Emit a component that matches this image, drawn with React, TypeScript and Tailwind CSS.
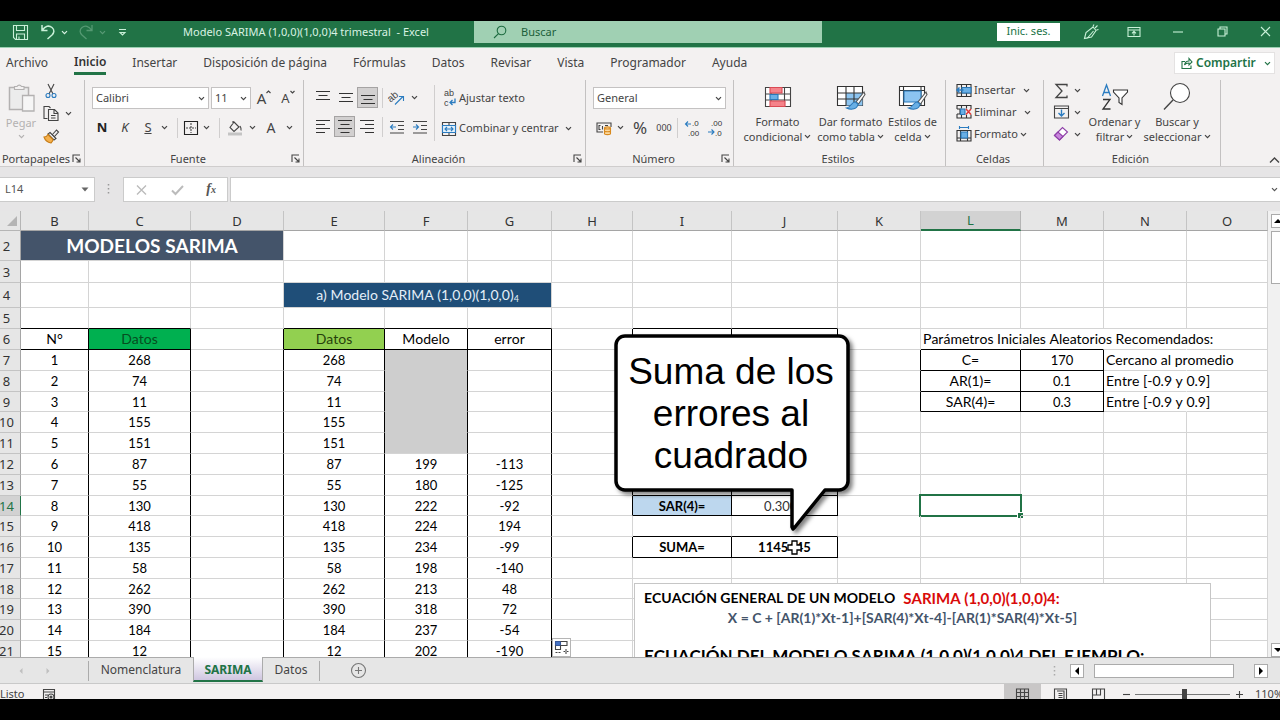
import React, { FC, ReactElement, ReactNode } from 'react';

const columns = ['B', 'C', 'D', 'E', 'F', 'G', 'H', 'I', 'J', 'K', 'L', 'M', 'N', 'O'];
const columnWidths = [68, 102, 93, 101, 83, 84, 81, 99, 106, 83, 100, 83, 83];

const datos = [268, 74, 11, 155, 151, 87, 55, 130, 418, 135, 58, 262, 390, 184, 12];
const modelo = [199, 180, 222, 224, 234, 198, 213, 318, 237, 202];
const errores = [-113, -125, -92, 194, -99, -140, 48, 72, -54, -190];

const rowHeights: Record<number, string> = {
  2: 'h-[30px]',
  3: 'h-[22px]',
  4: 'h-[25px]',
  9: 'h-[20px]',
  14: 'h-[20px]',
  18: 'h-[20px]',
};

interface Cell {
  text?: ReactNode;
  span?: number;
  className?: string;
}

const cells: Record<string, Cell> = {
  B2: { text: 'MODELOS SARIMA', span: 3, className: 'bg-[#44546a] text-[19px] font-bold text-white' },
  E4: {
    text: (
      <>
        a) Modelo SARIMA (1,0,0)(1,0,0)<sub className="text-[9px]">4</sub>
      </>
    ),
    span: 3,
    className: 'bg-[#1f4e78] text-[14px] text-[#e4eef8]',
  },
  B6: { text: 'N°', className: 'text-[14px]' },
  C6: { text: 'Datos', className: 'bg-[#00b050] text-[14px] text-[#064d20]' },
  E6: { text: 'Datos', className: 'bg-[#92d050] text-[14px] text-[#26400c]' },
  F6: { text: 'Modelo', className: 'text-[14px]' },
  G6: { text: 'error', className: 'text-[14px]' },
  L6: { text: 'Parámetros Iniciales Aleatorios Recomendados:', className: 'text-left text-[14px]' },
  L7: { text: 'C=', className: 'text-[14px]' },
  M7: { text: '170' },
  N7: { text: 'Cercano al promedio', className: 'text-left text-[14px]' },
  L8: { text: 'AR(1)=', className: 'text-[14px]' },
  M8: { text: '0.1' },
  N8: { text: 'Entre [-0.9 y 0.9]', className: 'text-left text-[14px]' },
  L9: { text: 'SAR(4)=', className: 'text-[14px]' },
  M9: { text: '0.3' },
  N9: { text: 'Entre [-0.9 y 0.9]', className: 'text-left text-[14px]' },
  I14: { text: 'SAR(4)=', className: 'bg-[#bdd7ee] font-bold' },
  J14: { text: '0.3000', className: 'text-[#333]' },
  I16: { text: 'SUMA=', className: 'font-bold' },
  J16: { text: '1145445', className: 'font-bold' },
};

datos.forEach((value, i) => {
  cells[`B${i + 7}`] = { text: i + 1 };
  cells[`C${i + 7}`] = { text: value };
  cells[`E${i + 7}`] = { text: value };
  if (i < 5) {
    cells[`F${i + 7}`] = { className: 'bg-[#cecece]' };
  } else {
    cells[`F${i + 7}`] = { text: modelo[i - 5] };
    cells[`G${i + 7}`] = { text: errores[i - 5] };
  }
});

const rightBorder = (col: string, row: number): string => {
  if (row >= 6 && 'BCDEFG'.includes(col)) return 'border-r-black';
  if (row >= 6 && row <= 14 && 'HIJ'.includes(col)) return 'border-r-black';
  if (row === 16 && 'HIJ'.includes(col)) return 'border-r-black';
  if (row >= 7 && row <= 9 && 'KLM'.includes(col)) return 'border-r-black';
  // text that runs over into the next cells hides the grid line
  if (row === 6 && 'LMN'.includes(col)) return 'border-r-transparent';
  if (row >= 7 && row <= 9 && col === 'N') return 'border-r-transparent';
  return 'border-r-[#d4d4d4]';
};

const bottomBorder = (col: string, row: number): string => {
  if ((row === 5 || row === 6) && 'BCEFG'.includes(col)) return 'border-b-black';
  if ([5, 13, 14, 15, 16].includes(row) && 'IJ'.includes(col)) return 'border-b-black';
  if (row >= 6 && row <= 9 && 'LM'.includes(col)) return 'border-b-black';
  if (row >= 7 && row <= 10 && col === 'F') return 'border-b-[#cecece]';
  return 'border-b-[#d4d4d4]';
};

const Chevron: FC<{ className?: string }> = ({ className = '' }): ReactElement => (
  <svg className={`w-[7px] h-[7px] shrink-0 ${className}`} viewBox="0 0 7 7" fill="none" stroke="currentColor" strokeWidth="1.2">
    <path d="M1 2.2 3.5 4.7 6 2.2" />
  </svg>
);

interface IconProps {
  w?: number;
  h?: number;
  className?: string;
  children: ReactNode;
}

const Icon: FC<IconProps> = ({ w = 16, h = 16, className = '', children }): ReactElement => (
  <svg
    width={w}
    height={h}
    viewBox={`0 0 ${w} ${h}`}
    className={`shrink-0 overflow-visible font-['Liberation_Sans',sans-serif] ${className}`}
    fill="none"
    stroke="#444"
    strokeWidth="1.1"
  >
    {children}
  </svg>
);

const Divider: FC<{ className?: string }> = ({ className = 'h-5' }): ReactElement => (
  <div className={`w-px shrink-0 bg-[#d0cece] ${className}`} />
);

interface ToolProps {
  label: string;
  className?: string;
  children: ReactNode;
}

const Tool: FC<ToolProps> = ({ label, className = 'w-[23px]', children }): ReactElement => (
  <button type="button" aria-label={label} className={`flex h-[21px] shrink-0 items-center justify-center ${className}`}>
    {children}
  </button>
);

const Lines: FC<{ d: string }> = ({ d }): ReactElement => (
  <Icon>
    <path d={d} stroke="#333" />
  </Icon>
);

interface GroupProps {
  title: string;
  className: string;
  launcher?: boolean;
  children: ReactNode;
}

const Group: FC<GroupProps> = ({ title, className, launcher = false, children }): ReactElement => (
  <section className={`flex shrink-0 flex-col border-r border-[#c3c1c1] ${className}`}>
    <div className="flex h-[71px] shrink-0">{children}</div>
    <div className="flex h-[15px] items-center pr-[3px]">
      <span className="flex-1 text-center text-[11px] leading-[15px] whitespace-nowrap">{title}</span>
      {launcher && (
        <button type="button" aria-label={`Opciones de ${title}`}>
          <Icon w={9} h={9}>
            <path d="M1 8V1h7M3.500 3.500 8 8M8 4.500V8H4.500" />
          </Icon>
        </button>
      )}
    </div>
  </section>
);

interface PickerProps {
  label: string;
  value: string;
  className: string;
}

const Picker: FC<PickerProps> = ({ label, value, className }): ReactElement => (
  <div className={`flex h-[22px] shrink-0 items-center border border-[#c4c2c2] bg-white pr-[3px] ${className}`}>
    <select aria-label={label} className="min-w-0 flex-1 appearance-none bg-transparent pl-[3px] text-[11px] outline-none">
      <option>{value}</option>
    </select>
    <Chevron />
  </div>
);

interface BigButtonProps {
  lines: [string, string];
  className: string;
  icon: ReactNode;
}

const BigButton: FC<BigButtonProps> = ({ lines, className, icon }): ReactElement => (
  <button type="button" className={`flex shrink-0 flex-col items-center text-[11px] leading-[15px] whitespace-nowrap ${className}`}>
    <span className="flex h-[34px] items-center">{icon}</span>
    <span>{lines[0]}</span>
    <span className="flex items-center gap-[2px]">
      {lines[1]}
      <Chevron />
    </span>
  </button>
);

const brush = (
  <>
    <path d="M28 8 20 18l2.500 2L29 10.500z" fill="#fff" stroke="#555" />
    <path d="M19.500 18c-4-.5-4 5-9 6 5 2.500 11 1 11.500-4z" fill="#69afe5" stroke="#2b78b8" />
  </>
);

const TitleBar: FC = (): ReactElement => (
  <header className="flex h-[27px] shrink-0 items-start border-b border-[#9bd0b2] bg-[#217346] text-[#d9f2e3]">
    <div className="flex h-[22px] w-[474px] shrink-0 items-center pl-[12px]">
      <button type="button" aria-label="Guardar">
        <Icon w={17} h={17}>
          <path stroke="#c9f0d8" d="M1.500 1.500h14v14h-12l-2-2zM4.500 1.500v5h8v-5M4.500 15v-5h8v5M7 15v-2.500" />
        </Icon>
      </button>
      <button type="button" aria-label="Deshacer" className="ml-[11px] flex items-center gap-[5px]">
        <Icon w={16}>
          <path stroke="#c9f0d8" strokeWidth="1.500" d="M2 1v5.500h5.500M2.500 6C5 2 9 1 12 3.500S14 9 12 11l-4.500 4" />
        </Icon>
        <Chevron />
      </button>
      <button type="button" aria-label="Rehacer" className="ml-[10px] flex items-center gap-[5px] opacity-30">
        <Icon w={16}>
          <path stroke="#c9f0d8" strokeWidth="1.300" d="M14 1v5.500H8.500M13.500 6C11 2 7 1 4 3.500S2 9 4 11l4.500 4" />
        </Icon>
        <Chevron />
      </button>
      <button type="button" aria-label="Personalizar barra" className="ml-[12px]">
        <Icon w={9} h={9}>
          <path stroke="#c9f0d8" d="M1 1.500h7M2 4.500 4.500 7 7 4.500z" />
        </Icon>
      </button>
      <h1 className="ml-[56px] text-[11px] whitespace-nowrap">Modelo SARIMA (1,0,0)(1,0,0)4 trimestral&nbsp; - Excel</h1>
    </div>
    <label className="flex h-[22px] w-[348px] items-center bg-[#a0d0b3] pl-[19px]">
      <Icon w={14} h={14}>
        <circle cx="8.500" cy="5.500" r="4.300" stroke="#1d6b40" />
        <path stroke="#1d6b40" d="M5.500 8.700 1 13" />
      </Icon>
      <input
        type="search"
        aria-label="Buscar"
        placeholder="Buscar"
        className="ml-[14px] min-w-0 flex-1 bg-transparent text-[11px] outline-none placeholder:text-[#1d5f3b]"
      />
    </label>
    <div className="ml-auto flex h-[21px] items-center pr-[9px]">
      <button type="button" className="h-[18px] w-[63px] bg-white text-[11px] text-[#217346]">
        Inic. ses.
      </button>
      <button type="button" aria-label="Dibujar" className="ml-[23px]">
        <Icon>
          <path stroke="#c9f0d8" d="M1.500 14.500 3 8.500 10 3l3 3.500-4.500 6.500zM4 14.500 10.500 7M10 2.500 11 .5M12 4l2.500-2.500M13.500 6l2-.5" />
        </Icon>
      </button>
      <button type="button" aria-label="Opciones de cinta" className="ml-[28px]">
        <Icon w={14} h={12}>
          <path stroke="#c9f0d8" d="M1 1.500h12v9H1zM1 4h12M7 9.500V5.500M5 7.300l2-2 2 2" />
        </Icon>
      </button>
      <button type="button" aria-label="Minimizar" className="ml-[32px]">
        <Icon w={10} h={10}>
          <path stroke="#c9f0d8" d="M0 5h10" />
        </Icon>
      </button>
      <button type="button" aria-label="Restaurar" className="ml-[34px]">
        <Icon w={11} h={11}>
          <path stroke="#c9f0d8" d="M1 3h7v7H1zM3 3V1h7v7H8" />
        </Icon>
      </button>
      <button type="button" aria-label="Cerrar" className="ml-[32px]">
        <Icon w={11} h={11}>
          <path stroke="#c9f0d8" d="m1 1 9 9M10 1 1 10" />
        </Icon>
      </button>
    </div>
  </header>
);

const menu = ['Archivo', 'Inicio', 'Insertar', 'Disposición de página', 'Fórmulas', 'Datos', 'Revisar', 'Vista', 'Programador', 'Ayuda'];

const Menu: FC = (): ReactElement => (
  <nav className="flex h-[30px] shrink-0 items-center gap-[26px] bg-[#f3f1f1] pl-[6px] text-[12px] text-[#444]">
    {menu.map((name) => (
      <a
        key={name}
        href="#inicio"
        className={
          name === 'Inicio'
            ? 'border-b-3 border-[#217346] pt-[1px] leading-[20px] font-semibold text-[#333]'
            : 'leading-[20px] whitespace-nowrap'
        }
      >
        {name}
      </a>
    ))}
    <button
      type="button"
      className="mr-[5px] ml-auto flex h-[22px] w-[101px] items-center border border-[#e4e2e2] bg-white pl-[6px] text-[12px] font-semibold text-[#217346]"
    >
      <Icon w={12} h={12}>
        <path stroke="#217346" d="M4 4.500H1v7h9V8.500M3.500 8c.5-3 2-4 4.500-4V1.500L11 5 8 8V6c-2 0-3.500.5-4.500 2z" />
      </Icon>
      <span className="mr-auto ml-[3px]">Compartir</span>
      <Chevron className="mr-[3px]" />
    </button>
  </nav>
);

const Ribbon: FC = (): ReactElement => (
  <div className="flex h-[89px] shrink-0 border-b border-[#cfcdcd] bg-[#f3f1f1] pt-[2px] text-[#444]">
    <Group title="Portapapeles" className="w-[85px]" launcher>
      <button type="button" className="flex w-[42px] flex-col items-center text-[11px] leading-[15px] text-[#b3b1b1]">
        <span className="flex h-[35px] items-center">
          <Icon w={27} h={29}>
            <path stroke="#b3b1b1" fill="#ececec" strokeWidth="1.500" d="M1.500 4.500h19v22h-19z" />
            <path stroke="#b3b1b1" fill="#f3f1f1" d="M6.500 6.500v-3h2.500a2.500 2.500 0 0 1 4.500 0H16v3z" />
            <path stroke="#b3b1b1" fill="#f6f6f6" strokeWidth="1.300" d="M14.500 12.500h11.500v15.500H14.500z" />
          </Icon>
        </span>
        Pegar
        <Chevron className="mt-[3px]" />
      </button>
      <div className="flex flex-col">
        <Tool label="Cortar" className="w-[18px]">
          <Icon>
            <path d="M5 1l5 10M11 1 6 11" />
            <circle cx="5" cy="12.500" r="2" stroke="#2b7cc0" />
            <circle cx="11" cy="12.500" r="2" stroke="#2b7cc0" />
          </Icon>
        </Tool>
        <button type="button" aria-label="Copiar" className="flex h-[24px] items-center gap-[5px]">
          <Icon w={18}>
            <path d="M5.500 13.500H2v-12h5l1.500 1.500M6.500 4.500h6l3.500 3.500v7.500H6.500zM12 4.500v4h4M9 10.500h4.500M9 13h4.500" />
          </Icon>
          <Chevron />
        </button>
        <Tool label="Copiar formato" className="w-[18px]">
          <Icon>
            <path d="m9 7 4.500-5 2 2-4.500 5z" />
            <path d="m7 4.500 6 6-2 1.500-6-6z" fill="#fff" />
            <path d="M5 6.500c-1 2-2.500 2.500-4 2.500 1 3 4 5.500 7 6 1-1 2-2 2-3.500z" fill="#f5b04c" stroke="#c77d16" />
          </Icon>
        </Tool>
      </div>
    </Group>

    <Group title="Fuente" className="w-[219px]" launcher>
      <div className="flex flex-col gap-[8px] pt-[7px] pl-[7px]">
        <div className="flex items-center gap-[2px]">
          <Picker label="Fuente" value="Calibri" className="w-[117px]" />
          <Picker label="Tamaño" value="11" className="w-[40px]" />
          <button type="button" className="flex w-[22px] items-start justify-center text-[15px] leading-[20px]">
            A
            <Icon w={5} h={8}>
              <path d="M.5 5 2.500 3l2 2" />
            </Icon>
          </button>
          <button type="button" className="flex w-[22px] items-start justify-center text-[13px] leading-[20px]">
            A
            <Icon w={5} h={8}>
              <path d="M.5 3 2.500 5l2-2" />
            </Icon>
          </button>
        </div>
        <div className="flex items-center text-[13px]">
          <button type="button" className="w-[20px] font-bold text-[#222]">N</button>
          <button type="button" className="w-[26px] italic">K</button>
          <button type="button" className="w-[20px] underline">S</button>
          <Chevron className="mr-[9px] ml-[3px]" />
          <Divider />
          <Tool label="Bordes" className="w-[25px]">
            <Icon>
              <path d="M1.500 1.500h13v13h-13z" stroke="#222" />
              <path d="M8 3v10M3 8h10" strokeDasharray="2 1" />
            </Icon>
          </Tool>
          <Chevron className="mr-[9px]" />
          <Divider />
          <Tool label="Relleno" className="w-[29px]">
            <Icon>
              <path d="m7 2 5 5-5 4.500L3 7.500zM6 4V1M13 6c1 1.500 1.500 3 1 4.500" />
              <path d="M1 14h14" stroke="#c4c4c4" strokeWidth="3" />
            </Icon>
          </Tool>
          <Chevron />
          <button type="button" className="w-[30px] text-[14px] leading-[18px]">A</button>
          <Chevron />
        </div>
      </div>
    </Group>

    <Group title="Alineación" className="w-[282px]" launcher>
      <div className="flex flex-col gap-[8px] pt-[7px] pl-[7px]">
        <div className="flex items-center">
          <Tool label="Arriba"><Lines d="M1 1.500h14M3.500 5.500h9M1 9.500h14" /></Tool>
          <Tool label="Medio"><Lines d="M1 3.500h14M3.500 7.500h9M1 11.500h14" /></Tool>
          <Tool label="Abajo" className="w-[21px] border border-[#a5a3a3] bg-[#d2d0d0]"><Lines d="M1 5.500h14M3.500 9.500h9M1 13.500h14" /></Tool>
          <Divider className="ml-[4px] h-5" />
          <Tool label="Orientación" className="w-[28px]">
            <Icon>
              <text x="0" y="9" transform="rotate(-40 6 9)" fontSize="10" fill="#444" stroke="none">ab</text>
              <path d="m6 14.500 8-8M10 6.500h4.500V11" stroke="#2b7cc0" />
            </Icon>
          </Tool>
          <Chevron />
        </div>
        <div className="flex items-center">
          <Tool label="Izquierda"><Lines d="M1 1.500h14M1 5.500h9M1 9.500h14M1 13.500h9" /></Tool>
          <Tool label="Centro" className="w-[21px] border border-[#a5a3a3] bg-[#d2d0d0]"><Lines d="M1 1.500h14M3.500 5.500h9M1 9.500h14M3.500 13.500h9" /></Tool>
          <Tool label="Derecha"><Lines d="M1 1.500h14M6 5.500h9M1 9.500h14M6 13.500h9" /></Tool>
          <Divider className="ml-[4px] h-5" />
          <Tool label="Disminuir sangría" className="w-[28px]">
            <Icon>
              <path d="M1 2.500h14M9 6.500h6M9 10.500h6M1 14h14" />
              <path d="M7 8H1.500M4 5.500 1.500 8 4 10.500" stroke="#2b7cc0" />
            </Icon>
          </Tool>
          <Tool label="Aumentar sangría" className="w-[18px]">
            <Icon>
              <path d="M1 2.500h14M9 6.500h6M9 10.500h6M1 14h14" />
              <path d="M1 8h5.500M4 5.500 6.500 8 4 10.500" stroke="#2b7cc0" />
            </Icon>
          </Tool>
        </div>
      </div>
      <Divider className="mt-[5px] ml-[5px] h-[56px]" />
      <div className="flex flex-col gap-[9px] pt-[7px] pl-[7px] text-[11px]">
        <button type="button" className="flex h-[22px] items-center gap-[3px]">
          <Icon w={14}>
            <text x="2" y="6" fontSize="9" fill="#444" stroke="none">ab</text>
            <text x="2" y="16" fontSize="9" fill="#444" stroke="none">c</text>
            <path d="M13 8.500v4H8M10.500 10 8 12.500l2.500 2.500" stroke="#2b7cc0" strokeWidth="1.300" />
          </Icon>
          Ajustar texto
        </button>
        <button type="button" className="flex h-[21px] items-center gap-[3px] whitespace-nowrap">
          <Icon w={14}>
            <path d="M.5 1.500h13v13H.5zM7 1.500v3M7 11.500v3" />
            <path d="M.5 4.500h13v7H.5z" fill="#e3f1fb" stroke="#2b7cc0" />
            <path d="M3 8h8M5 6 3 8l2 2M9 6l2 2-2 2" stroke="#2b7cc0" />
          </Icon>
          Combinar y centrar
          <Chevron className="ml-[3px]" />
        </button>
      </div>
    </Group>

    <Group title="Número" className="w-[148px]" launcher>
      <div className="flex flex-col gap-[8px] pt-[7px] pl-[7px]">
        <Picker label="Formato de número" value="General" className="w-[133px]" />
        <div className="flex items-center">
          <Tool label="Moneda" className="w-[22px]">
            <Icon>
              <path d="M7 12H1V3h14v4M4.500 5.500H3v4h1.500M6.500 6v3.500M9 5.500h3" />
              <path d="M8.500 8v5.500c0 1.500 6 1.500 6 0V8c0-1.500-6-1.500-6 0 0 1.300 6 1.300 6 0M8.500 10.800c0 1.300 6 1.300 6 0" fill="#fbd9a0" stroke="#d98a1e" />
            </Icon>
          </Tool>
          <Chevron className="ml-[2px]" />
          <button type="button" className="w-[32px] text-[17px] leading-[21px]">%</button>
          <button type="button" className="w-[16px] text-[9px]">000</button>
          <Divider className="ml-[5px] h-5" />
          <Tool label="Aumentar decimales" className="w-[28px]">
            <Icon>
              <path d="M7 4H1.500M4 1.500 1.500 4 4 6.500" stroke="#2b7cc0" />
              <text x="8" y="6" fontSize="8" fill="#333" stroke="none">.0</text>
              <text x="4" y="16" fontSize="8" fill="#333" stroke="none">.00</text>
            </Icon>
          </Tool>
          <Tool label="Disminuir decimales" className="w-[18px]">
            <Icon>
              <path d="M1 12h6M4.500 9.500 7 12l-2.500 2.500" stroke="#2b7cc0" />
              <text x="4" y="6" fontSize="8" fill="#333" stroke="none">.00</text>
              <text x="8" y="16" fontSize="8" fill="#333" stroke="none">.0</text>
            </Icon>
          </Tool>
        </div>
      </div>
    </Group>

    <Group title="Estilos" className="w-[212px]">
      <BigButton
        lines={['Formato', 'condicional']}
        className="w-[87px]"
        icon={
          <Icon w={28} h={22}>
            <path d="M1.500 1.500h25v19h-25zM1.500 8h25M1.500 14h25M7 1.500v19M20.500 1.500v19" fill="#fff" />
            <path d="M6 1.500h12V7H6zM6 15h15v5.500H6z" fill="#f5838a" stroke="#d94a54" />
            <path d="M6 8.500h8v5H6z" fill="#69afe5" stroke="#2b78b8" />
          </Icon>
        }
      />
      <BigButton
        lines={['Dar formato', 'como tabla']}
        className="w-[59px]"
        icon={
          <Icon w={30} h={26}>
            <path d="M1.500 2.500h25v19h-25z" fill="#fff" stroke="#333" />
            <path d="M10 9h16.500v12.500H10z" fill="#8cc4f0" stroke="none" />
            <path d="M1.500 9h25M1.500 15h25M10 2.500v19M18 2.500v19" stroke="#333" />
            {brush}
          </Icon>
        }
      />
      <BigButton
        lines={['Estilos de', 'celda']}
        className="w-[65px]"
        icon={
          <Icon w={30} h={26}>
            <path d="M1.500 2.500h25v19h-25zM1.500 6.500h25M5.500 2.500v19M23 2.500v19" fill="#fff" stroke="#333" />
            <path d="M6 7h17v11H6z" fill="#8cc4f0" stroke="#2b78b8" />
            {brush}
          </Icon>
        }
      />
    </Group>

    <Group title="Celdas" className="w-[98px]">
      <div className="flex flex-col pl-[10px] text-[11px]">
        <button type="button" className="flex h-[21px] items-center gap-[2px]">
          <Icon>
            <path d="M1 1.500h14v12H1zM1 10h14M5.500 1.500v12M10.500 1.500v12" stroke="#333" />
            <path d="M6 4.500h9v5.500H6z" fill="#69afe5" stroke="#2b78b8" />
            <path d="M7.500 7H1M3.500 4.500 1 7l2.500 2.500" stroke="#2b7cc0" strokeWidth="1.500" />
          </Icon>
          Insertar
          <Chevron className="ml-[6px]" />
        </button>
        <button type="button" className="flex h-[22px] items-center gap-[2px]">
          <Icon>
            <path d="M1 5V1.500h14V5M1 10v4h14v-3.500M5.500 1.500v3M10.500 1.500v3M5.500 11v3M10.500 11v3M1 5h3v5H1" stroke="#333" />
            <path d="M4.500 5H9v5.500H4.500z" fill="#69afe5" stroke="#2b78b8" />
            <path d="m10 5 5 5.500M15 5l-5 5.500" stroke="#e03a3a" strokeWidth="1.500" />
          </Icon>
          Eliminar
          <Chevron className="ml-[6px]" />
        </button>
        <button type="button" className="flex h-[22px] items-center gap-[2px]">
          <Icon>
            <path d="M1 4.500h14V15H1zM1 12h14M4.500 4.500V15M11.500 4.500V15" stroke="#333" />
            <path d="M5 6h6.500v6H5z" fill="#69afe5" stroke="#2b78b8" />
            <path d="M3.500 0v3M12.500 0v3M3.500 1.500h9" stroke="#2b7cc0" />
          </Icon>
          Formato
          <Chevron />
        </button>
      </div>
    </Group>

    <Group title="Edición" className="w-[177px]">
      <div className="flex w-[39px] flex-col pl-[9px]">
        <button type="button" aria-label="Autosuma" className="flex h-[21px] items-center gap-[5px]">
          <Icon><path d="M14 3.500v-2H3L9 8l-6 6.500h11v-2" strokeWidth="1.300" /></Icon>
          <Chevron />
        </button>
        <button type="button" aria-label="Rellenar" className="flex h-[22px] items-center gap-[5px]">
          <Icon>
            <path d="M1.500 2h14v12h-14zM1.500 4.500h14" />
            <path d="M8.500 5.500v6M5.500 9l3 3 3-3" stroke="#2b7cc0" strokeWidth="1.400" />
          </Icon>
          <Chevron />
        </button>
        <button type="button" aria-label="Borrar" className="flex h-[22px] items-center gap-[5px]">
          <Icon>
            <path d="m1.500 9.500 8-8 5 4.500-8 8z" fill="#fff" stroke="#8e3fa8" />
            <path d="m1.500 9.500 3.500-3.500 5 4.500-3.500 3.500z" fill="#c886dc" stroke="#8e3fa8" />
          </Icon>
          <Chevron />
        </button>
      </div>
      <BigButton
        lines={['Ordenar y', 'filtrar']}
        className="w-[63px]"
        icon={
          <Icon w={28} h={28}>
            <path d="M1.500 13 5.500 2l4 11M3 9.500h5" stroke="#2b7cc0" strokeWidth="1.300" />
            <path d="M2 16.500h7L2 26h7.500" stroke="#333" strokeWidth="1.300" />
            <path d="M12.500 7h14v2L21 15v6.500l-3-2V15l-5.500-6z" fill="#fff" stroke="#333" />
          </Icon>
        }
      />
      <BigButton
        lines={['Buscar y', 'seleccionar']}
        className="w-[62px]"
        icon={
          <Icon w={28} h={30}>
            <circle cx="17" cy="11" r="9.500" fill="#fff" />
            <path d="M10 18 1 27.500" strokeWidth="1.400" />
          </Icon>
        }
      />
    </Group>
    <button type="button" aria-label="Contraer la cinta" className="ml-auto self-end pb-[2px]">
      <Icon w={11} h={8}><path d="M1 6.500 5.500 2 10 6.500" strokeWidth="1.400" /></Icon>
    </button>
  </div>
);

const FormulaBar: FC = (): ReactElement => (
  <div className="flex h-[44px] shrink-0 items-start bg-[#e6e5e6] pt-[10px] text-[#555]">
    <div className="flex h-[25px] w-[95px] shrink-0 items-center border border-l-0 border-[#cbcbcb] bg-white pr-[5px]">
      <input aria-label="Cuadro de nombres" defaultValue="L14" className="w-0 flex-1 bg-transparent pl-[5px] text-[11px] outline-none" />
      <svg className="h-[5px] w-[8px]" viewBox="0 0 8 5"><path d="M.5.5h7L4 4.500z" fill="#666" /></svg>
    </div>
    <svg className="mt-[6px] ml-[12px] h-[12px] w-[3px] shrink-0" viewBox="0 0 3 12">
      <path d="M1.500 1v11" stroke="#999" strokeWidth="1.500" strokeDasharray="1.500 2.500" />
    </svg>
    <div className="ml-[13px] flex h-[25px] w-[105px] shrink-0 items-center justify-between border border-[#cbcbcb] bg-white px-[11px]">
      <button type="button" aria-label="Cancelar">
        <Icon w={13} h={12}><path d="m2 1.500 9 9M11 1.500l-9 9" stroke="#bbb" strokeWidth="1.400" /></Icon>
      </button>
      <button type="button" aria-label="Introducir">
        <Icon w={13} h={12}><path d="m1 6.500 3.500 3.500L12 2" stroke="#bbb" strokeWidth="2" /></Icon>
      </button>
      <button type="button" className="font-['Liberation_Serif',serif] text-[14px] leading-[20px] font-bold italic">
        f<span className="text-[10px]">x</span>
      </button>
    </div>
    <div className="ml-[2px] flex h-[25px] min-w-0 flex-1 items-center border border-r-0 border-[#cbcbcb] bg-white pr-[2px]">
      <input aria-label="Barra de fórmulas" className="w-0 flex-1 bg-transparent px-2 text-[12px] outline-none" />
      <Chevron />
    </div>
  </div>
);

const Grid: FC = (): ReactElement => (
  <table className="w-full table-fixed border-separate border-spacing-0 font-['Lato',sans-serif] text-[13px] leading-[18px] text-black [font-kerning:none]">
    <colgroup>
      <col style={{ width: 21 }} />
      {columnWidths.map((width, i) => (
        <col key={columns[i]} style={{ width }} />
      ))}
      <col />
    </colgroup>
    <thead>
      <tr className="h-[20px] bg-[#e6e6e6] font-['Noto_Sans',sans-serif] text-[13px] text-[#333]">
        <th className="border-r border-b border-[#b5b5b5]">
          <svg className="ml-[6px] h-[12px] w-[12px]" viewBox="0 0 12 12"><path d="M11 1v10H1z" fill="#b4b4b4" /></svg>
        </th>
        {columns.map((col) => (
          <th
            key={col}
            className={
              col === 'L'
                ? 'border-r border-b-2 border-r-[#b5b5b5] border-b-[#217346] bg-[#d2d2d2] p-0 font-normal text-[#217346]'
                : 'border-r border-b border-r-[#c4c4c4] border-b-[#a5a5a5] p-0 font-normal'
            }
          >
            {col}
          </th>
        ))}
      </tr>
    </thead>
    <tbody>
      {Array.from({ length: 20 }, (_, i) => i + 2).map((row) => {
        let covered = 0;
        return (
          <tr key={row} className={rowHeights[row] || 'h-[21px]'}>
            <th
              className={`border-r border-b p-0 pr-[7px] font-['Noto_Sans',sans-serif] text-[13px] font-normal ${
                row === 14
                  ? 'border-r-[#217346] border-b-[#c4c4c4] bg-[#d2d2d2] text-[#217346]'
                  : 'border-r-[#a5a5a5] border-b-[#c4c4c4] bg-[#e6e6e6] text-[#333]'
              }`}
            >
              <span className="flex justify-center">{row}</span>
            </th>
            {columns.map((col) => {
              if (covered > 0) {
                covered -= 1;
                return null;
              }
              const cell = cells[`${col}${row}`] || {};
              covered = (cell.span || 1) - 1;
              return (
                <td
                  key={col}
                  colSpan={cell.span}
                  className={`relative border-r border-b p-0 whitespace-nowrap ${rightBorder(col, row)} ${bottomBorder(col, row)} ${
                    cell.className?.includes('text-left') ? 'pl-[2px]' : 'text-center'
                  } ${cell.className || ''}`}
                >
                  {cell.text}
                  {col === 'L' && row === 14 && (
                    <span className="absolute -inset-x-[2px] -inset-y-[2px] border-2 border-[#217346]">
                      <span className="absolute -right-[3px] -bottom-[3px] h-[5px] w-[5px] bg-[#217346] outline outline-white" />
                    </span>
                  )}
                </td>
              );
            })}
          </tr>
        );
      })}
    </tbody>
  </table>
);

const EquationBox: FC = (): ReactElement => (
  <div className="absolute top-[372px] left-[634px] h-[130px] w-[577px] border border-[#c6c6c6] bg-white px-[9px] pt-[3px] font-['Lato',sans-serif] font-bold whitespace-nowrap [font-kerning:none]">
    <p className="flex gap-[8px] text-[14px] leading-[22px] text-black">
      ECUACIÓN GENERAL DE UN MODELO <span className="text-[15px] text-[#d90b0b]">SARIMA (1,0,0)(1,0,0)4:</span>
    </p>
    <p className="pr-[40px] text-center text-[14px] leading-[18px] text-[#44546a]">X = C + [AR(1)*Xt-1]+[SAR(4)*Xt-4]-[AR(1)*SAR(4)*Xt-5]</p>
    <p className="pt-[18px] text-[17px] leading-[22px] text-black">ECUACIÓN DEL MODELO SARIMA (1,0,0)(1,0,0)4 DEL EJEMPLO:</p>
  </div>
);

const Callout: FC = (): ReactElement => (
  <div className="absolute top-[121px] left-[612px] h-[204px] w-[242px]">
    <svg className="absolute inset-0 drop-shadow-[3px_3px_2px_rgba(0,0,0,0.5)]" width="242" height="204" viewBox="0 0 242 204">
      <path
        d="M13 4h214a9 9 0 0 1 9 9v136a9 9 0 0 1-9 9h-14l-30 37-2 2-1-2v-37H13a9 9 0 0 1-9-9V13a9 9 0 0 1 9-9z"
        fill="#fff"
        stroke="#000"
        strokeWidth="3.500"
        strokeLinejoin="round"
      />
    </svg>
    <p className="relative px-[8px] pt-[19px] pr-[12px] text-center font-['Liberation_Sans',sans-serif] text-[37px] leading-[42px] text-black">
      Suma de los
      <br />
      errores al
      <br />
      cuadrado
    </p>
  </div>
);

const Arrow: FC<{ d: string }> = ({ d }): ReactElement => (
  <svg className="h-[8px] w-[8px]" viewBox="0 0 8 8">
    <path d={d} fill="currentColor" />
  </svg>
);

const Sheet: FC = (): ReactElement => (
  <main className="flex min-h-0 flex-1 overflow-hidden bg-white">
    <div className="relative min-w-0 flex-1 overflow-hidden">
      <Grid />
      <EquationBox />
      <button
        type="button"
        aria-label="Opciones de autorrelleno"
        className="absolute top-[427px] left-[552px] flex h-[19px] w-[19px] items-center justify-center border border-[#b5b5b5] bg-white"
      >
        <Icon w={15} h={15}>
          <path d="M1.500 1.500h5v4h-5z" fill="#4472c4" stroke="#38589b" />
          <path d="M6.500 1.500H13v4H6.500M1.500 5.500v4h5v-4" />
          <path d="M1.500 12.500h6M12 9v5M9.500 11.500h5" strokeDasharray="2 1" />
        </Icon>
      </button>
      <Callout />
      <svg className="absolute top-[329px] left-[787px] h-[15px] w-[15px]" viewBox="0 0 15 15">
        <path d="M5 1h5v4h4v5h-4v4H5v-4H1V5h4z" fill="#fff" stroke="#000" strokeWidth="1.300" />
      </svg>
    </div>
    <div className="flex w-[12px] shrink-0 flex-col overflow-hidden bg-[#f1f1f1] pl-[3px]">
      <button type="button" aria-label="Subir" className="mt-[3px] flex h-[14px] w-[14px] shrink-0 items-center justify-center border border-[#ababab] bg-white">
        <Arrow d="M0 6h8L4 2z" />
      </button>
      <div className="mt-[3px] h-[53px] w-[14px] shrink-0 border border-[#ababab] bg-white" />
      <button type="button" aria-label="Bajar" className="mt-auto flex h-[14px] w-[14px] shrink-0 items-center justify-center border border-[#ababab] bg-white">
        <Arrow d="M0 2h8L4 6z" />
      </button>
    </div>
  </main>
);

const SheetTabs: FC = (): ReactElement => (
  <div className="flex h-[27px] shrink-0 items-start border-t border-b border-t-[#ababab] border-b-[#c9c9c9] bg-[#e6e6e6] text-[12px] text-[#444]">
    <div className="flex h-[25px] w-[88px] shrink-0 items-center gap-[19px] pl-[17px] text-[#c0c0c0]">
      <Arrow d="M5.500 1v6L2.500 4z" />
      <Arrow d="M2.500 1v6l3-3z" />
    </div>
    <div className="mt-[3px] h-[20px] w-px bg-[#ababab]" />
    <button type="button" className="h-[24px] w-[104px] shrink-0">Nomenclatura</button>
    <button
      type="button"
      className="-mt-px h-[25px] w-[70px] shrink-0 border-x border-b-2 border-x-[#ababab] border-b-[#217346] bg-linear-to-b from-white to-[#cfc6e0] pt-[3px] font-bold text-[#217346]"
    >
      SARIMA
    </button>
    <button type="button" className="h-[24px] w-[56px] shrink-0">Datos</button>
    <div className="mt-[3px] h-[20px] w-px bg-[#ababab]" />
    <button type="button" aria-label="Hoja nueva" className="mt-[4px] ml-[30px]">
      <Icon w={17} h={17}>
        <circle cx="8.500" cy="8.500" r="7" stroke="#777" />
        <path d="M8.500 5v7M5 8.500h7" stroke="#777" />
      </Icon>
    </button>
    <div className="ml-auto flex h-[26px] items-center pr-[12px]">
      <svg className="mr-[14px] h-[12px] w-[3px]" viewBox="0 0 3 12">
        <path d="M1.500 1v11" stroke="#aaa" strokeWidth="1.500" strokeDasharray="1.500 2.500" />
      </svg>
      <button type="button" aria-label="Izquierda" className="flex h-[14px] w-[14px] items-center justify-center border border-[#ababab] bg-white text-black">
        <Arrow d="M6 0v8L2 4z" />
      </button>
      <div className="mx-[10px] h-[14px] w-[140px] border border-[#ababab] bg-white" />
      <button type="button" aria-label="Derecha" className="ml-[10px] flex h-[14px] w-[14px] items-center justify-center border border-[#ababab] bg-white text-black">
        <Arrow d="M2 0v8l4-4z" />
      </button>
    </div>
  </div>
);

const StatusBar: FC = (): ReactElement => (
  <footer className="h-[15px] shrink-0 overflow-hidden bg-[#f3f1f1] text-[11px] text-[#444]">
    <div className="flex h-[21px] items-center">
      <span>Listo</span>
      <Icon w={14} h={14} className="ml-[17px]">
        <path d="M1.500 1.500h11v11h-11zM1.500 4h11M3 7h3M3 9.500h2" />
        <circle cx="9" cy="9" r="3" />
        <circle cx="9" cy="9" r="1" fill="#444" />
      </Icon>
      <div className="ml-auto flex h-full shrink-0 items-center">
        <Tool label="Normal" className="w-[37px] bg-[#c8c6c6]">
          <Icon w={13} h={13}><path d="M.5 1h12v11H.5zM.5 4.500h12M.5 8.500h12M4.500 1v11M8.500 1v11" /></Icon>
        </Tool>
        <Tool label="Diseño de página" className="w-[38px]">
          <Icon w={13} h={13}><path d="M.5 1h12v11H.5zM3 3h7v9H3M4.500 5.500h4M4.500 7.500h4M4.500 9.500h4" /></Icon>
        </Tool>
        <Tool label="Salto de página" className="w-[38px]">
          <Icon w={13} h={13}><path d="M.5 12V1h12v11M.5 7h8V1M4.500 1v6" /></Icon>
        </Tool>
        <Tool label="Alejar" className="w-[18px]">
          <Icon w={9} h={9}><path d="M1 4.500h7" /></Icon>
        </Tool>
        <input
          type="range"
          aria-label="Zoom"
          defaultValue={52}
          className="h-px w-[95px] appearance-none bg-[#777] [&::-webkit-slider-thumb]:h-[11px] [&::-webkit-slider-thumb]:w-[5px] [&::-webkit-slider-thumb]:appearance-none [&::-webkit-slider-thumb]:bg-[#444]"
        />
        <Tool label="Acercar" className="w-[18px]">
          <Icon w={9} h={9}><path d="M1 4.500h7M4.500 1v7" /></Icon>
        </Tool>
        <span className="w-[32px] pl-[7px]">110%</span>
      </div>
    </div>
  </footer>
);

const App: FC = (): ReactElement => (
  <div className="flex h-screen min-h-[480px] flex-col overflow-hidden bg-black py-[21px] font-['Noto_Sans',sans-serif]">
    <TitleBar />
    <Menu />
    <Ribbon />
    <FormulaBar />
    <Sheet />
    <SheetTabs />
    <StatusBar />
  </div>
);

export default App;
